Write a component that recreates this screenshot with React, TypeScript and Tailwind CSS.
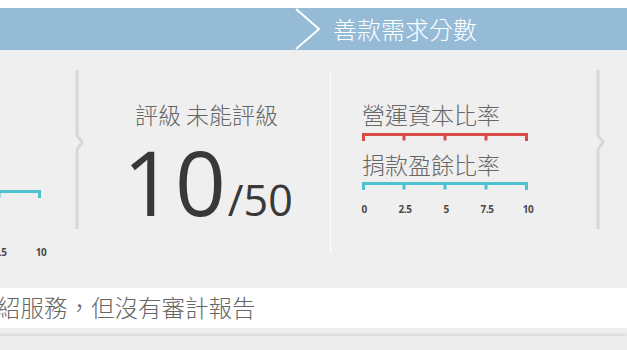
import React from 'react';

const cjk = "font-['Noto_Sans_CJK_TC','Noto_Sans_CJK_SC',sans-serif]";
const num = "font-['Open_Sans','Liberation_Sans',sans-serif]";

const ticks = ['0', '2.5', '5', '7.5', '10'];

// bracket-style scale bar drawn as svg
function ScaleBar({ color }: { color: string }) {
  return (
    <svg width="166" height="8" viewBox="0 0 166 8" className="block">
      <path d="M1.5 8 V1.5 H164.5 V8" fill="none" stroke={color} strokeWidth="3" />
      {[42, 83, 124].map((x) => (
        <path key={x} d={`M${x} 1 V7.5`} stroke={color} strokeWidth="3" />
      ))}
    </svg>
  );
}

function TickLabels() {
  return (
    <div className={`relative h-[12px] w-[166px] ${num} text-[10px] font-bold tracking-[-0.5px] text-[#4a4a4a] leading-none`}>
      {ticks.map((t, i) => (
        <span
          key={t}
          className="absolute top-0 -translate-x-1/2"
          style={{ left: 2 + i * 41 }}
        >
          {t}
        </span>
      ))}
    </div>
  );
}

function Divider() {
  return (
    <div className="w-[10px] shrink-0 pt-[20px]">
      <svg width="10" height="159" viewBox="0 0 10 159" className="block">
        <path
          d="M2 0 V64 C2 68 7 70 7 72 C7 74 2 77 2 81 V159"
          fill="none"
          stroke="#d4d8dc"
          strokeWidth="3"
        />
      </svg>
    </div>
  );
}

export default function App() {
  return (
    <div className="w-[627px] h-[350px] overflow-hidden bg-[#efefef]">
      <div className="h-[8px] bg-white" />

      {/* banner */}
      <div className="h-[42px] bg-[#95bbd7] flex items-center">
        <svg width="30" height="42" viewBox="0 0 30 42" className="ml-[294px] shrink-0">
          <path d="M2 1 L25 21 L2 41" fill="none" stroke="#fff" strokeWidth="2" />
        </svg>
        <span className={`ml-[9px] ${cjk} font-light text-[24px] leading-none text-white`}>
          善款需求分數
        </span>
      </div>

      {/* panels */}
      <div className="h-[238px] flex">
        <div className="w-[75px] shrink-0 overflow-hidden">
          <div className="ml-[-125px] pt-[140px]">
            <ScaleBar color="#4fc1d0" />
            <div className="mt-[49px]">
              <TickLabels />
            </div>
          </div>
        </div>

        <Divider />

        <div className="w-[245px] shrink-0 pt-[53px] pl-[50px]">
          <div className={`${cjk} text-[23px] leading-none text-[#666] font-light whitespace-nowrap`}>
            評級 未能評級
          </div>
          <div className={`mt-[20px] ml-[-12px] flex items-baseline ${num} text-[#383838] leading-[0.8]`}>
            <span className="text-[89px] tracking-[1px]">10</span>
            <span className="text-[43px] ml-[1px]">/50</span>
          </div>
        </div>

        <div className="w-[1px] shrink-0 mt-[20px] h-[183px] bg-white" />

        <div className="w-[265px] shrink-0 pt-[53px] pl-[31px]">
          <div className={`${cjk} text-[23px] leading-none text-[#666] font-light whitespace-nowrap`}>
            營運資本比率
          </div>
          <div className="mt-[7px]">
            <ScaleBar color="#d64a4a" />
          </div>
          <div className={`mt-[12px] ${cjk} text-[23px] leading-none text-[#666] font-light whitespace-nowrap`}>
            捐款盈餘比率
          </div>
          <div className="mt-[6px]">
            <ScaleBar color="#4fc1d0" />
          </div>
          <div className="mt-[14px]">
            <TickLabels />
          </div>
        </div>

        <Divider />
      </div>

      {/* footer note */}
      <div className="h-[40px] bg-white flex items-center overflow-hidden">
        <span className={`ml-[-3px] ${cjk} text-[23.5px] leading-none text-[#666] font-light whitespace-nowrap`}>
          紹服務，但沒有審計報告
        </span>
      </div>
      <div className="h-[8px]" />
      <div className="h-[14px] bg-[#ececec] shadow-[0_-2px_3px_rgba(0,0,0,0.10)]" />
    </div>
  );
}
